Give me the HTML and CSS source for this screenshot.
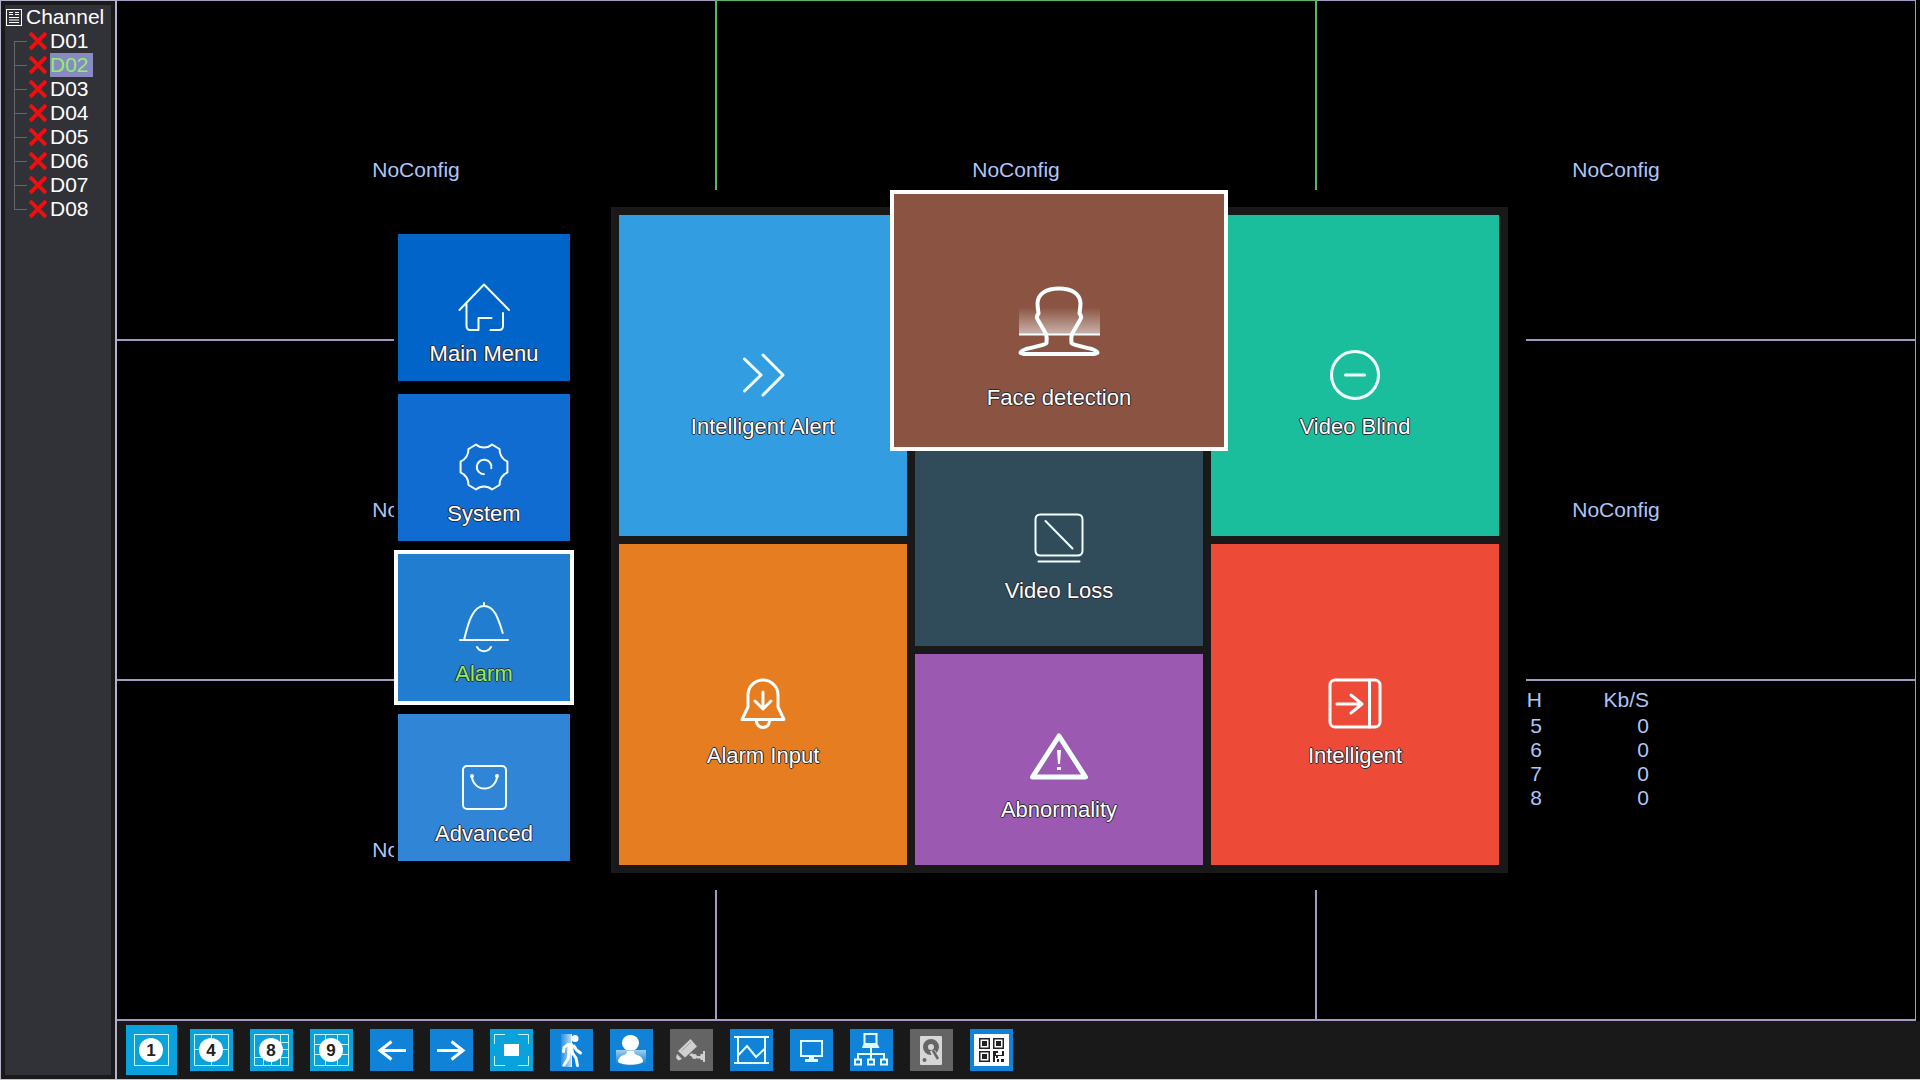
FILE: index.html
```html
<!DOCTYPE html>
<html lang="en">
<head>
    <meta charset="UTF-8">
    <meta name="viewport" content="width=device-width, initial-scale=1.0">
    <title>Live View</title>
    <link rel="stylesheet" href="styles.css">
</head>
<body>
    <div class="screen">
        <aside class="sidebar">
            <h1 class="tree-title">
                <svg width="16" height="17" viewBox="0 0 16 17">
                    <rect x="0.5" y="0.5" width="15" height="16" fill="none" stroke="#fff"/>
                    <path d="M3 3.5h4M3 5.5h4M9 3.5h4M9 5.5h4M3 8.5h10M3 11h10M3 13.5h10" stroke="#fff"/>
                </svg>
                Channel
            </h1>
            <ul class="tree">
                <li><svg class="cross" viewBox="0 0 18 18"><path d="M1 1l16 16M17 1l-16 16"/></svg><a href="#">D01</a></li>
                <li><svg class="cross" viewBox="0 0 18 18"><path d="M1 1l16 16M17 1l-16 16"/></svg><a href="#" class="active">D02</a></li>
                <li><svg class="cross" viewBox="0 0 18 18"><path d="M1 1l16 16M17 1l-16 16"/></svg><a href="#">D03</a></li>
                <li><svg class="cross" viewBox="0 0 18 18"><path d="M1 1l16 16M17 1l-16 16"/></svg><a href="#">D04</a></li>
                <li><svg class="cross" viewBox="0 0 18 18"><path d="M1 1l16 16M17 1l-16 16"/></svg><a href="#">D05</a></li>
                <li><svg class="cross" viewBox="0 0 18 18"><path d="M1 1l16 16M17 1l-16 16"/></svg><a href="#">D06</a></li>
                <li><svg class="cross" viewBox="0 0 18 18"><path d="M1 1l16 16M17 1l-16 16"/></svg><a href="#">D07</a></li>
                <li><svg class="cross" viewBox="0 0 18 18"><path d="M1 1l16 16M17 1l-16 16"/></svg><a href="#">D08</a></li>
            </ul>
        </aside>

        <main class="video-wall">
            <div class="cell">NoConfig</div>
            <div class="cell selected">NoConfig</div>
            <div class="cell">NoConfig</div>
            <div class="cell">NoConfig</div>
            <div class="cell"></div>
            <div class="cell">NoConfig</div>
            <div class="cell">NoConfig</div>
            <div class="cell"></div>
            <div class="cell stats">
                <table>
                    <thead>
                        <tr><th>CH</th><th>Kb/S</th></tr>
                    </thead>
                    <tbody>
                        <tr><td>5</td><td>0</td></tr>
                        <tr><td>6</td><td>0</td></tr>
                        <tr><td>7</td><td>0</td></tr>
                        <tr><td>8</td><td>0</td></tr>
                    </tbody>
                </table>
            </div>
        </main>

        <nav class="toolbar">
            <button class="tool split active" aria-label="View 1">
                <svg viewBox="0 0 43 42">
                    <rect class="thin" x="4.500" y="5.500" width="34" height="31"/>
                    <circle cx="21" cy="21" r="12"/><text x="21" y="27">1</text>
                </svg>
            </button>
            <button class="tool split" aria-label="View 4">
                <svg viewBox="0 0 43 42">
                    <path class="thin" d="M4.5 5.500h34v31h-34zM21.500 5v32M4 20.500h35"/>
                    <circle cx="21" cy="21" r="12"/><text x="21" y="27">4</text>
                </svg>
            </button>
            <button class="tool split" aria-label="View 8">
                <svg viewBox="0 0 43 42">
                    <path class="thin" d="M4.5 5.500h34v31h-34zM30.500 5v32M4 28.500h35M30 13.500h9M30 20.500h9M13.500 28v9M21.500 28v9"/>
                    <circle cx="21" cy="21" r="12"/><text x="21" y="27">8</text>
                </svg>
            </button>
            <button class="tool split" aria-label="View 9">
                <svg viewBox="0 0 43 42">
                    <path class="thin" d="M4.5 5.500h34v31h-34zM15.500 5v32M27.500 5v32M4 15.500h35M4 25.500h35"/>
                    <circle cx="21" cy="21" r="12"/><text x="21" y="27">9</text>
                </svg>
            </button>
            <button class="tool" aria-label="Previous">
                <svg viewBox="0 0 43 42"><path class="arrow" d="M36 21.500H10M21.500 12.500L10 21.500l11.500 9"/></svg>
            </button>
            <button class="tool" aria-label="Next">
                <svg viewBox="0 0 43 42"><path class="arrow" d="M7 21.500h26M21.500 12.500L33 21.500l-11.500 9"/></svg>
            </button>
            <button class="tool split" aria-label="Full screen">
                <svg viewBox="0 0 43 42">
                    <path class="thin" d="M4.5 15V5.500H15M28 5.500h10.500V15M38.500 27v9.500H28M15 36.500H4.500V27"/>
                    <rect x="14" y="15" width="15" height="12" fill="#fff"/>
                </svg>
            </button>
            <button class="tool" aria-label="Motion">
                <svg viewBox="0 0 43 42">
                    <defs>
                        <linearGradient id="walk-fade"><stop offset="0" stop-color="#fff" stop-opacity="0.100"/><stop offset="1" stop-color="#fff" stop-opacity="0.700"/></linearGradient>
                    </defs>
                    <rect x="11" y="5" width="10" height="33" fill="url(#walk-fade)"/>
                    <path d="M21.500 5v33" stroke="#dff" stroke-width="1"/>
                    <circle cx="25" cy="9.500" r="3.500" fill="#fff"/>
                    <path d="M18 14l5 .5-1 10-5-.5zM23 15l1 10h-2z" fill="#fff"/>
                    <path d="M18 15.500l-4 3-.5 4M24 17l2.500 4 4 3M19 24l-1 6-4 6M22.500 24l3.500 5 1.500 7.500" fill="none" stroke="#fff" stroke-width="3" stroke-linecap="round" stroke-linejoin="round"/>
                </svg>
            </button>
            <button class="tool" aria-label="Face">
                <svg viewBox="0 0 43 42">
                    <defs>
                        <linearGradient id="bust-fade" x2="0" y2="1"><stop offset="0" stop-color="#fff" stop-opacity="0.600"/><stop offset="1" stop-color="#fff" stop-opacity="0"/></linearGradient>
                    </defs>
                    <rect x="6" y="21" width="30" height="14" fill="url(#bust-fade)"/>
                    <ellipse cx="20.500" cy="14" rx="8.500" ry="8" fill="#fff"/>
                    <path d="M17 20h7c0 4 0 5 3 6 4 1 6 4 6 6 0 5-25 5-25 0 0-2 2-5 6-6 3-1 3-2 3-6z" fill="#fff"/>
                    <path d="M6 21.500h30" stroke="#9fd0f4"/>
                </svg>
            </button>
            <button class="tool disabled" aria-label="Camera">
                <svg viewBox="0 0 43 42">
                    <g fill="#d0d0d0">
                        <path d="M8 22L20.500 10l6.500 7.500L15 28.500z"/>
                        <path d="M7 25l5 5-3.500 1.500-2.500-2.500z"/>
                        <circle cx="24.500" cy="27.500" r="2.500"/>
                        <path d="M19 26l3-2 3 3-1 2zM26 27h7v2.500h-6zM33 22h2v11h-2zM30.500 25h2.500v6h-2.500z"/>
                    </g>
                    <path d="M11.500 22l9.500-9" stroke="#a4a4a4" stroke-width="1"/>
                </svg>
            </button>
            <button class="tool" aria-label="Image">
                <svg viewBox="0 0 43 42"><path class="line" d="M4 8h35M4 34h35M8 8v26M35 8v26M8.500 26l8.500-9 9 11 8.500-8"/></svg>
            </button>
            <button class="tool" aria-label="Display">
                <svg viewBox="0 0 43 42">
                    <rect class="line" x="11" y="12" width="21" height="15"/>
                    <path d="M19 28h5v2h4v3H15v-3h4z" fill="#e8ffff"/>
                </svg>
            </button>
            <button class="tool" aria-label="Network">
                <svg viewBox="0 0 43 42">
                    <path class="line" d="M14.500 5h12v10h-12zM21 19v11M8 30v-5h26v5"/>
                    <path d="M13 15.500h15l1.500 3.500H12z" fill="#dff6ff"/>
                    <path class="line" d="M5 30.500h6v5H5zM18 30.500h6v5h-6zM31 30.500h6v5h-6z"/>
                </svg>
            </button>
            <button class="tool disabled" aria-label="Hard disk">
                <svg viewBox="0 0 43 42">
                    <rect x="10" y="7" width="22" height="29" rx="1" fill="#d6d6d6"/>
                    <path class="platter" d="M29 20A8 8 0 1 0 20 26V22"/>
                    <circle cx="21" cy="18" r="5.500" fill="none" stroke="#666" stroke-width="5"/>
                    <path d="M20 22l3 8 6-2-4-7z" fill="#d6d6d6"/>
                    <path d="M23 21.500l5 8.500" stroke="#666" stroke-width="2.500"/>
                    <circle cx="14.500" cy="31" r="2" fill="#666"/>
                </svg>
            </button>
            <button class="tool" aria-label="QR code">
                <svg viewBox="0 0 43 42">
                    <rect x="4" y="5" width="35" height="32" fill="#fff"/>
                    <g fill="none" stroke="#222" stroke-width="1.500">
                        <rect x="9.750" y="9.750" width="9.500" height="9.500"/>
                        <rect x="23.750" y="9.750" width="9.500" height="9.500"/>
                        <rect x="9.750" y="22.750" width="9.500" height="9.500"/>
                    </g>
                    <path d="M12 12h5v5h-5zM26 12h5v5h-5zM12 25h5v5h-5zM23 22h5v2h-2v2h6v-4h2v5h-6v2h-2v-2h-1v6h-2zM27 30h2v3h-2zM31 30h3v3h-3z" fill="#222"/>
                </svg>
            </button>
        </nav>
    </div>

    <div class="overlay">
        <div class="dialog">
            <nav class="menu">
                <button class="menu-item main">
                    <svg viewBox="-27 -27 54 54"><path d="M-24.500 3L0-22.500 25 3M-17.500-3v22q0 4 4 4h8V11H7.500M19 6v13q0 4-4 4H6.500"/></svg>
                    Main Menu
                </button>
                <button class="menu-item system">
                    <svg viewBox="-27 -27 54 54">
                        <path d="M8-22.500A12 12 0 0 1-8-22.500L-15.500-18A14 14 0 0 1-23.400-5.400V5.400A14 14 0 0 1-15.500 18L-8 22.500A12 12 0 0 1 8 22.500L15.500 18A14 14 0 0 1 23.400 5.400V-5.400A14 14 0 0 1 15.500-18Z"/>
                        <path d="M0 7.300A7.300 7.300 0 1 1 7.300 1.300"/>
                    </svg>
                    System
                </button>
                <button class="menu-item alarm active">
                    <svg viewBox="-27 -27 54 54"><path d="M0-24v3M-19.700 12C-15-8-10-21 0-21S14-10 18.700 6M-24 13H24M-7 20A8 8 0 0 0 7 20"/></svg>
                    Alarm
                </button>
                <button class="menu-item advanced">
                    <svg viewBox="-27 -27 54 54">
                        <rect x="-21" y="-21" width="43" height="43" rx="4"/>
                        <path d="M-12-11A12.500 12.500 0 0 0 13-11"/>
                        <circle cx="-12" cy="-11" r="1"/><circle cx="13" cy="-11" r="1"/>
                    </svg>
                    Advanced
                </button>
            </nav>

            <div class="panel">
                <div class="column">
                    <button class="tile blue">
                        <svg viewBox="-32 -32 64 64"><path d="M-18.500-16L-2 0-18.500 16M0-20L20 0 0 20"/></svg>
                        Intelligent Alert
                    </button>
                    <button class="tile orange">
                        <svg viewBox="-32 -32 64 64">
                            <path d="M-21 15.500L-15 3V-9A15 15 0 0 1 15-9V3L21 15.500ZM-6.500 17A6.500 6.500 0 0 0 6.500 17"/>
                            <path d="M0-12V5M-8-3L0 5 8-3"/>
                        </svg>
                        Alarm Input
                    </button>
                </div>
                <div class="column">
                    <button class="tile brown focused">
                        <svg viewBox="-49 -49 98 98">
                            <defs>
                                <linearGradient id="scan-fade" x2="0" y2="1"><stop offset="0" stop-color="#fff" stop-opacity="0"/><stop offset="1" stop-color="#fff" stop-opacity="0.550"/></linearGradient>
                            </defs>
                            <rect x="-40" y="-14" width="81" height="27" fill="url(#scan-fade)" stroke="none"/>
                            <path d="M-40 13.500H41" stroke-width="2" stroke-linecap="butt"/>
                            <path d="M0-32.500C-13-32.500-21-27-21.500-18C-21.500-13-20.500-9-20.500-7.500C-23-5-22-2-20.500 0L-13 13C-12 16-12 18-12.500 22C-14 24-20 25-33 28C-41 31-40 33-32 33H32C40 33 41 31 33 28C20 25 14 24 12.500 22C12 18 12 16 13 13L20.500 0C22-2 23-5 20.500-7.500C20.500-9 21.500-13 21.500-18C21-27 13-32.500 0-32.500Z" stroke-width="4"/>
                        </svg>
                        Face detection
                    </button>
                    <button class="tile slate">
                        <svg viewBox="-32 -32 64 64">
                            <path d="M-18.500-24.500h37q5 0 5 5v31q0 5-5 5h-37q-5 0-5-5v-31q0-5 5-5zM-13.500-18L13.500 9.500M-20.500 22.500H20.500" stroke-width="2"/>
                        </svg>
                        Video Loss
                    </button>
                    <button class="tile purple">
                        <svg viewBox="-32 -32 64 64">
                            <path d="M0-22L26.500 19H-26.500Z" stroke-width="5"/>
                            <path d="M-2-8H2L1 6H-1ZM-2 9H2V12H-2Z" fill="#fff" stroke="none"/>
                        </svg>
                        Abnormality
                    </button>
                </div>
                <div class="column">
                    <button class="tile green">
                        <svg viewBox="-32 -32 64 64"><circle r="23.500"/><path d="M-9.500 0H9.500"/></svg>
                        Video Blind
                    </button>
                    <button class="tile red">
                        <svg viewBox="-32 -32 64 64">
                            <rect x="-25" y="-24" width="50" height="47" rx="5"/>
                            <path d="M14.500-24V23M-18 0H7M-4-9L7 0-4 9"/>
                        </svg>
                        Intelligent
                    </button>
                </div>
            </div>
        </div>
    </div>
</body>
</html>
```
FILE: styles.css
```css
* {
    box-sizing: border-box;
}

body {
    margin: 0;
    background-color: #000;
    color: #fff;
    font-family: "Liberation Sans", Arial, sans-serif;
    font-size: 21px;
    line-height: 24px;
}

button {
    border: none;
    padding: 0;
    color: inherit;
    font: inherit;
    cursor: pointer;
}

svg {
    display: block;
    flex: none;
}

.screen {
    display: grid;
    grid-template-columns: 117px 1fr;
    grid-template-rows: 1fr auto;
    min-height: 100vh;
    border-bottom: 1px solid #c4c4c4;
}

/* Channel tree */
.sidebar {
    grid-row: span 2;
    padding: 4px 4px 4px 1px;
    background-color: #313138;
    border: solid #b4b0c8;
    border-width: 1px 2px 0 1px;
    box-shadow: inset 0 0 0 4px #191a1c;
}

.tree-title {
    display: flex;
    align-items: center;
    gap: 4px;
    margin: 0;
    padding-left: 4px;
    font-size: 21px;
    font-weight: normal;
}

.tree {
    margin: 0;
    padding-left: 12px;
    list-style: none;
}

.tree li {
    display: flex;
    align-items: center;
    height: 24px;
    background: linear-gradient(#66666c, #66666c) left top / 1px 100% no-repeat,
                linear-gradient(#66666c, #66666c) left center / 13px 1px no-repeat;
}

.tree li:first-child {
    background-size: 1px 50%, 13px 1px;
    background-position: left bottom, left center;
}

.tree li:last-child {
    background-size: 1px 50%, 13px 1px;
}

.tree a {
    padding-right: 4px;
    color: #fff;
    text-decoration: none;
}

.tree a.active {
    background-color: #8a8ac0;
    color: #8cf070;
}

.cross {
    width: 18px;
    margin: 0 3px 0 15px;
    stroke: #ec1010;
    stroke-width: 4;
}

/* Video wall */
.video-wall {
    display: grid;
    grid-template-columns: repeat(3, 1fr);
    grid-template-rows: repeat(3, 1fr);
    gap: 2px;
    margin-right: 4px;
    padding: 1px 1px 2px 0;
    background-color: #a898c4;
    overflow: hidden;
}

.cell {
    display: flex;
    align-items: center;
    justify-content: center;
    background-color: #000;
    color: #b0c4f8;
}

.cell.selected {
    outline: 2px solid #5cb464;
}

.stats {
    align-items: flex-start;
    justify-content: flex-start;
    padding-top: 5px;
}

.stats table {
    border-collapse: collapse;
    text-align: right;
}

.stats th,
.stats td {
    width: 107px;
    padding: 0;
    font-weight: normal;
}

.stats th {
    height: 28px;
}

.stats th:first-child {
    width: 225px;
}

/* Bottom toolbar */
.toolbar {
    display: flex;
    align-items: center;
    gap: 17px;
    min-height: 58px;
    padding: 0 13px;
    background-color: #191919;
}

.tool {
    display: flex;
    align-items: center;
    justify-content: center;
    width: 43px;
    height: 42px;
    background-color: #1083d8;
}

.tool svg {
    width: 43px;
    height: 42px;
}

.tool.split {
    background-color: #0aa2dc;
}

.tool.split circle {
    fill: #fff;
}

.tool.disabled {
    background-color: #646464;
}

.tool.active {
    width: 51px;
    height: 50px;
    margin: 0 -4px;
}

.tool .thin {
    fill: none;
    stroke: #c8f4ff;
}

.tool .line {
    fill: none;
    stroke: #e8ffff;
    stroke-width: 2;
}

.tool .arrow {
    fill: none;
    stroke: #fff;
    stroke-width: 3;
}

.tool .platter {
    fill: #d6d6d6;
}

.tool text {
    fill: #222;
    font-size: 17px;
    font-weight: bold;
    text-anchor: middle;
}

/* Menu dialog */
.overlay {
    position: fixed;
    inset: 0;
    display: flex;
    align-items: center;
    justify-content: center;
}

.dialog {
    display: flex;
    align-items: center;
    gap: 41px;
    width: 100%;
    max-width: 1132px;
    padding: 17px 18px 17px 4px;
    background-color: #000;
    font-size: 22px;
}

.menu {
    display: grid;
    gap: 13px;
    width: 172px;
    padding-top: 15px;
}

.menu-item,
.tile {
    display: flex;
    flex-direction: column;
    align-items: center;
    justify-content: center;
    gap: 8px;
    padding-top: 30px;
    text-shadow: 1px 0 #2a2a33, -1px 0 #2a2a33, 0 1px #2a2a33, 0 -1px #2a2a33;
}

.menu-item svg,
.tile svg {
    fill: none;
    stroke: #f4ffff;
    stroke-linecap: round;
    stroke-linejoin: round;
}

.menu-item {
    min-height: 147px;
}

.menu-item svg {
    width: 54px;
    stroke-width: 2;
}

.menu-item.active {
    color: #8cf060;
    box-shadow: 0 0 0 4px #fff;
}

.main {
    background-color: #0064c8;
}

.system {
    background-color: #106cd0;
}

.alarm {
    background-color: #217dd0;
}

.advanced {
    background-color: #3085d6;
}

.panel {
    display: grid;
    grid-template-columns: repeat(3, 1fr);
    gap: 8px;
    flex: 1;
    min-height: 666px;
    padding: 8px 9px 8px 8px;
    background-color: #191919;
}

.column {
    display: grid;
    grid-auto-rows: 1fr;
    gap: 8px;
}

.tile svg {
    width: 64px;
    stroke-width: 3;
}

.tile.focused {
    z-index: 1;
    gap: 16px;
    margin: -25px;
    padding-top: 40px;
    border: 4px solid #fff;
}

.tile.focused svg {
    width: 98px;
}

.blue {
    background-color: #329de0;
}

.orange {
    background-color: #e67d20;
}

.brown {
    background-color: #8a5342;
}

.slate {
    background-color: #304c5a;
}

.purple {
    background-color: #9c59b2;
}

.green {
    background-color: #1bbe9c;
}

.red {
    background-color: #ee4a38;
}
```
